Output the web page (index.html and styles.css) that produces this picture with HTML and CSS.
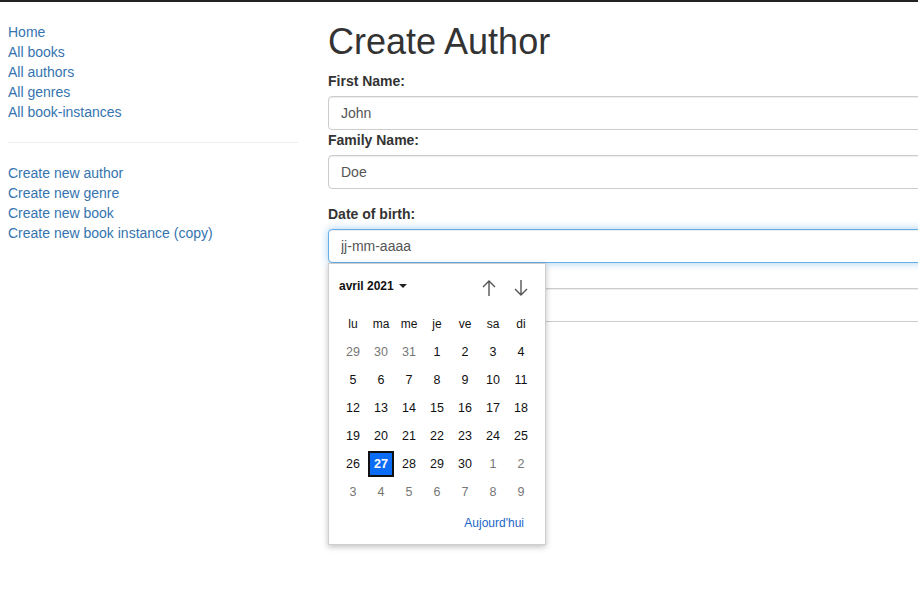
FILE: index.html
```html
<!DOCTYPE html>
<html lang="fr">
<head>
<meta charset="utf-8">
<title>Create Author</title>
<link rel="stylesheet" href="styles.css">
</head>
<body>
<div class="topbar"></div>
<div class="layout">
  <nav class="sidebar">
    <ul class="nav-list">
      <li><a href="#">Home</a></li>
      <li><a href="#">All books</a></li>
      <li><a href="#">All authors</a></li>
      <li><a href="#">All genres</a></li>
      <li><a href="#">All book-instances</a></li>
    </ul>
    <hr class="sep">
    <ul class="nav-list">
      <li><a href="#">Create new author</a></li>
      <li><a href="#">Create new genre</a></li>
      <li><a href="#">Create new book</a></li>
      <li><a href="#">Create new book instance (copy)</a></li>
    </ul>
  </nav>
  <main class="main">
    <h1 class="title">Create Author</h1>
    <form class="form">
      <div class="form-group">
        <label class="label">First Name:</label>
        <input class="control" type="text" value="John">
        <label class="label">Family Name:</label>
        <input class="control" type="text" value="Doe">
      </div>
      <div class="form-group">
        <label class="label">Date of birth:</label>
        <div class="date-wrap">
          <input class="control focus" type="text" value="jj-mm-aaaa">
          <div class="picker">
            <div class="picker-head">
              <span class="month">avril 2021<span class="caret"></span></span>
              <span class="arrows">
                <svg class="arrow" width="18" height="18" viewBox="0 0 18 18"><path d="M9 17V2M3 8l6-6 6 6" fill="none" stroke="#555" stroke-width="1.4"/></svg>
                <svg class="arrow" width="18" height="18" viewBox="0 0 18 18"><path d="M9 1v15M3 10l6 6 6-6" fill="none" stroke="#555" stroke-width="1.4"/></svg>
              </span>
            </div>
            <div class="grid">
              <span class="wd">lu</span><span class="wd">ma</span><span class="wd">me</span><span class="wd">je</span><span class="wd">ve</span><span class="wd">sa</span><span class="wd">di</span>
              <span class="d out">29</span><span class="d out">30</span><span class="d out">31</span><span class="d">1</span><span class="d">2</span><span class="d">3</span><span class="d">4</span>
              <span class="d">5</span><span class="d">6</span><span class="d">7</span><span class="d">8</span><span class="d">9</span><span class="d">10</span><span class="d">11</span>
              <span class="d">12</span><span class="d">13</span><span class="d">14</span><span class="d">15</span><span class="d">16</span><span class="d">17</span><span class="d">18</span>
              <span class="d">19</span><span class="d">20</span><span class="d">21</span><span class="d">22</span><span class="d">23</span><span class="d">24</span><span class="d">25</span>
              <span class="d">26</span><span class="d sel">27</span><span class="d">28</span><span class="d">29</span><span class="d">30</span><span class="d out">1</span><span class="d out">2</span>
              <span class="d out">3</span><span class="d out">4</span><span class="d out">5</span><span class="d out">6</span><span class="d out">7</span><span class="d out">8</span><span class="d out">9</span>
            </div>
            <div class="picker-foot"><a href="#" class="today">Aujourd'hui</a></div>
          </div>
        </div>
        <div class="label-space"></div>
        <input class="control" type="text" value="">
      </div>
    </form>
  </main>
</div>
</body>
</html>
```
FILE: styles.css
```css
html, body {
  margin: 0;
  padding: 0;
  background: #fff;
  overflow: hidden;
}
body {
  font-family: "Liberation Sans", Arial, sans-serif;
  font-size: 14px;
  line-height: 20px;
  color: #333;
  width: 918px;
  height: 594px;
}
.topbar {
  height: 2px;
  background: #222;
}
.layout {
  display: flex;
  align-items: flex-start;
}
.sidebar {
  width: 290px;
  flex: none;
  padding: 20px 0 0 8px;
}
.nav-list {
  list-style: none;
  margin: 0;
  padding: 0;
}
.nav-list a {
  color: #3574b0;
  text-decoration: none;
}
.sep {
  border: 0;
  border-top: 1px solid #eee;
  margin: 20px 0;
  height: 0;
}
.main {
  margin-left: 30px;
  width: 640px;
  flex: none;
}
.title {
  font-size: 36px;
  line-height: 1.1;
  font-weight: 500;
  margin: 20px 0 9px;
  color: #333;
}
.form-group {
  margin-bottom: 15px;
}
.label {
  display: block;
  font-weight: bold;
  margin-bottom: 5px;
  line-height: 20px;
}
.label-space {
  height: 25px;
}
.control {
  display: block;
  box-sizing: border-box;
  width: 100%;
  height: 34px;
  padding: 6px 12px;
  font-family: "Liberation Sans", Arial, sans-serif;
  font-size: 14px;
  line-height: 20px;
  color: #555;
  background: #fff;
  border: 1px solid #ccc;
  border-radius: 4px;
  box-shadow: inset 0 1px 1px rgba(0,0,0,.075);
  margin: 0;
  outline: none;
}
.control.focus {
  border-color: #66afe9;
  box-shadow: inset 0 1px 1px rgba(0,0,0,.075), 0 0 8px rgba(102,175,233,.6);
}
.date-wrap {
  position: relative;
}
.picker {
  position: absolute;
  top: 100%;
  left: 0;
  z-index: 10;
  width: 218px;
  box-sizing: border-box;
  background: #fff;
  border: 1px solid #cfcfcf;
  box-shadow: 0 2px 6px rgba(0,0,0,.25);
  padding: 10px 10px 12px;
  font-family: "Liberation Sans", Arial, sans-serif;
  color: #111;
}
.picker-head {
  height: 24px;
  display: flex;
  align-items: center;
  justify-content: space-between;
  margin-bottom: 12px;
}
.month {
  font-size: 12px;
  font-weight: bold;
  display: flex;
  align-items: center;
}
.caret {
  display: inline-block;
  width: 0;
  height: 0;
  border-left: 4px solid transparent;
  border-right: 4px solid transparent;
  border-top: 4px solid #222;
  margin-left: 5px;
}
.arrows {
  display: flex;
  gap: 14px;
  margin-right: 5px;
  margin-top: 4px;
}
.arrow {
  display: block;
}
.grid {
  display: grid;
  grid-template-columns: repeat(7, 28px);
  grid-auto-rows: 28px;
}
.grid span {
  display: flex;
  align-items: center;
  justify-content: center;
  font-size: 12.5px;
  color: #111;
}
.grid .wd {
  font-size: 12px;
}
.grid .out {
  color: #767676;
}
.grid .sel {
  margin: 1px;
  box-sizing: border-box;
  background: #0b6cf6;
  border: 2px solid #111;
  color: #fff;
  font-weight: bold;
}
.picker-foot {
  margin-top: 8px;
  height: 18px;
  display: flex;
  align-items: center;
  justify-content: flex-end;
  padding-right: 11px;
}
.today {
  font-size: 12px;
  color: #1a65c8;
  text-decoration: none;
}
```
